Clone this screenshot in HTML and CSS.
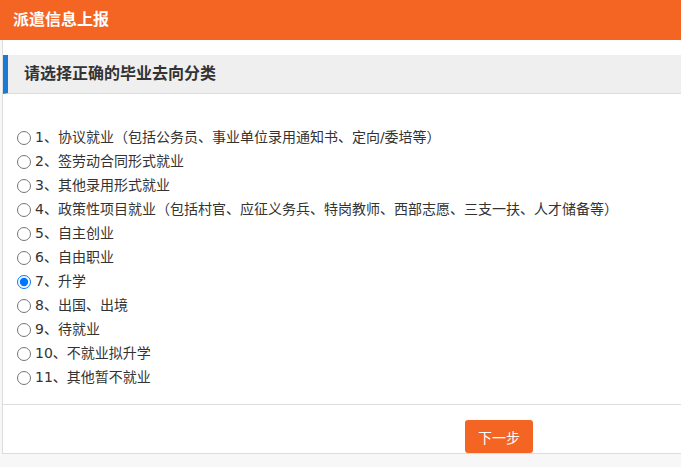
FILE: index.html
```html
<!DOCTYPE html>
<html lang="zh-CN">
<head>
    <meta charset="UTF-8">
    <meta name="viewport" content="width=device-width, initial-scale=1.0">
    <title>派遣信息上报</title>
    <link rel="stylesheet" href="styles.css">
</head>
<body>

    <header class="top-bar">派遣信息上报</header>

    <div class="panel">
        <h2 class="panel-title">请选择正确的毕业去向分类</h2>

        <!-- 毕业去向选项 -->
        <form class="options">
            <label class="option"><input type="radio" name="qx" value="1">1、协议就业（包括公务员、事业单位录用通知书、定向/委培等）</label>
            <label class="option"><input type="radio" name="qx" value="2">2、签劳动合同形式就业</label>
            <label class="option"><input type="radio" name="qx" value="3">3、其他录用形式就业</label>
            <label class="option"><input type="radio" name="qx" value="4">4、政策性项目就业（包括村官、应征义务兵、特岗教师、西部志愿、三支一扶、人才储备等）</label>
            <label class="option"><input type="radio" name="qx" value="5">5、自主创业</label>
            <label class="option"><input type="radio" name="qx" value="6">6、自由职业</label>
            <label class="option"><input type="radio" name="qx" value="7" checked>7、升学</label>
            <label class="option"><input type="radio" name="qx" value="8">8、出国、出境</label>
            <label class="option"><input type="radio" name="qx" value="9">9、待就业</label>
            <label class="option"><input type="radio" name="qx" value="10">10、不就业拟升学</label>
            <label class="option"><input type="radio" name="qx" value="11">11、其他暂不就业</label>
        </form>

        <div class="actions">
            <button type="button" class="btn-next">下一步</button>
        </div>
    </div>

</body>
</html>
```

FILE: styles.css
```css
html, body {
    margin: 0;
    padding: 0;
    overflow: hidden;
}
body {
    font-family: "DejaVu Sans", "Noto Sans CJK SC", sans-serif;
    background-color: #f7f7f7;
    color: #333;
    height: 467px;
}
.top-bar {
    background-color: #f46423;
    color: #fff;
    height: 40px;
    line-height: 40px;
    padding-left: 13px;
    font-size: 16px;
    font-weight: bold;
    width: 100%;
}
.panel {
    background-color: #fff;
    margin-left: 2px;
    width: 992px;
    border: 1px solid #ddd;
    border-top: none;
    padding-top: 15px;
}
.panel-title {
    margin: 0;
    height: 38px;
    line-height: 38px;
    background-color: #efefef;
    border-left: 5px solid #1a7bd6;
    border-bottom: 1px solid #ddd;
    padding-left: 16px;
    font-size: 16px;
    font-weight: bold;
    color: #333;
}
.options {
    padding: 30px 0 16px 14px;
    border-bottom: 1px solid #ddd;
}
.option {
    display: flex;
    align-items: center;
    height: 24px;
    font-size: 14px;
}
.option input {
    margin: 4px 4px 0 0;
    width: 14px;
    height: 14px;
}
.actions {
    display: flex;
    justify-content: center;
    padding-top: 15px;
}
.btn-next {
    background-color: #f46423;
    color: #fff;
    border: none;
    border-radius: 3px;
    width: 68px;
    height: 33px;
    font-size: 14px;
    font-family: "DejaVu Sans", "Noto Sans CJK SC", sans-serif;
    cursor: pointer;
}
```
